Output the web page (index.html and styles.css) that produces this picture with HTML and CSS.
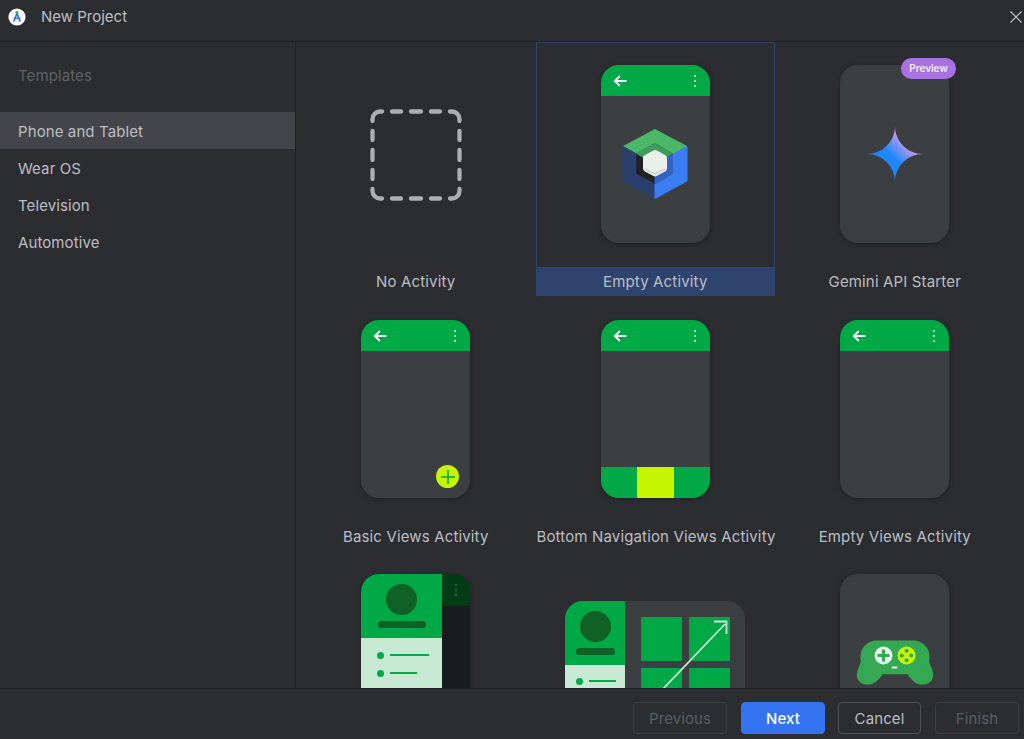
FILE: index.html
```html
<!DOCTYPE html>
<html lang="en">
<head>
<meta charset="utf-8">
<title>New Project</title>
<link rel="stylesheet" href="styles.css">
</head>
<body>
<svg class="defs" width="0" height="0" aria-hidden="true">
  <symbol id="back" viewBox="0 0 14 12"><path d="M13.500 6H2M6.800 1L1.800 6l5 5" fill="none" stroke="#fff" stroke-width="1.900"/></symbol>
  <symbol id="dots" viewBox="0 0 4 14"><g fill="#d5eedd"><circle cx="2" cy="2" r="1"/><circle cx="2" cy="7" r="1"/><circle cx="2" cy="12" r="1"/></g></symbol>
</svg>
<div class="dialog">
  <header class="titlebar">
    <svg class="app-logo" viewBox="0 0 18 18" width="18" height="18">
      <circle cx="9" cy="9" r="8.600" fill="#fff"/>
      <path d="M9 3.200L4.900 13.600h1.900L9 7.600l2.200 6h1.900z" fill="#2f6fe0"/>
      <path d="M5.600 10.200h6.800" stroke="#2f6fe0" stroke-width="1.300"/>
      <circle cx="9" cy="4.600" r="1.500" fill="#34a853"/>
    </svg>
    <span class="title">New Project</span>
    <svg class="close" viewBox="0 0 12 12" width="12" height="12"><path d="M.5.5l11 11M11.500.5l-11 11" stroke="#c3c5ca" stroke-width="1.100" fill="none"/></svg>
  </header>
  <div class="body">
    <aside class="sidebar">
      <div class="side-title">Templates</div>
      <ul class="side-list">
        <li class="side-item active">Phone and Tablet</li>
        <li class="side-item">Wear OS</li>
        <li class="side-item">Television</li>
        <li class="side-item">Automotive</li>
      </ul>
    </aside>
    <main class="gallery">
      <div class="grid">
        <div class="cell">
          <div class="art">
            <svg class="dashed" viewBox="0 0 92 92" width="92" height="92">
              <path d="M2.500 12V10A7.500 7.500 0 0 1 10 2.500H12M22 2.500H31M41 2.500H51M61 2.500H70M80 2.500H82A7.500 7.500 0 0 1 89.500 10V12M89.500 22V31M89.500 41V51M89.500 61V70M89.500 80V82A7.500 7.500 0 0 1 82 89.500H80M70 89.500H61M51 89.500H41M31 89.500H22M12 89.500H10A7.500 7.500 0 0 1 2.500 82V80M2.500 70V61M2.500 51V41M2.500 31V22" fill="none" stroke="#aeafb1" stroke-width="4.300" stroke-linecap="round"/>
            </svg>
          </div>
          <div class="label">No Activity</div>
        </div>
        <div class="cell selected">
          <div class="art">
            <div class="phone">
              <div class="appbar"><svg class="ic-back"><use href="#back"/></svg><svg class="ic-dots"><use href="#dots"/></svg></div>
              <div class="phone-center">
                <svg class="cube" viewBox="0 0 66 70" width="66" height="70">
                  <path d="M33 .5L65 17.500 33 35 1 17.500z" fill="#4bb868" stroke="#4bb868" stroke-linejoin="round"/>
                  <path d="M1 17.500L33 35v34.500L1 52z" fill="#2a3f6e" stroke="#2a3f6e" stroke-linejoin="round"/>
                  <path d="M65 17.500L33 35v34.500L65 52z" fill="#3b7df2" stroke="#3b7df2" stroke-linejoin="round"/>
                  <path d="M33 15.500L49.500 25v19L33 53.500 15.500 44V25z" fill="#202124" stroke="#202124" stroke-width="2.500" stroke-linejoin="round"/>
                  <path d="M33 14.500L50.500 24.500 33 35 14.500 24.500z" fill="#3f9c5f" stroke="#3f9c5f" stroke-linejoin="round"/>
                  <path d="M50.500 25v19.500L33 54.500V35z" fill="#3463bf" stroke="#3463bf" stroke-linejoin="round"/>
                  <path d="M33 24.500l8.500 4.500v10.500L33 44l-8.500-4.500V29z" fill="#e9f0ea" stroke="#e9f0ea" stroke-width="7" stroke-linejoin="round"/>
                  <path d="M22 40.500l11 6 11-6-1-1.500-10 5-10-5z" fill="#d2d9d3"/>
                </svg>
              </div>
            </div>
          </div>
          <div class="label">Empty Activity</div>
        </div>
        <div class="cell">
          <div class="art">
            <div class="phone">
              <div class="phone-center full">
                <svg class="spark" viewBox="0 0 56 56" width="56" height="56">
                  <defs><linearGradient id="sg" x1="0.200" y1="0.800" x2="0.800" y2="0.200"><stop offset="0.420" stop-color="#1f87ff"/><stop offset="0.620" stop-color="#6c91f5"/><stop offset="0.800" stop-color="#bb98ea"/></linearGradient></defs>
                  <path d="M28 0C28 15.500 40.500 28 56 28 40.500 28 28 40.500 28 56 28 40.500 15.500 28 0 28 15.500 28 28 15.500 28 0z" fill="url(#sg)"/>
                </svg>
              </div>
            </div>
            <span class="badge">Preview</span>
          </div>
          <div class="label">Gemini API Starter</div>
        </div>
        <div class="cell">
          <div class="art">
            <div class="phone">
              <div class="appbar"><svg class="ic-back"><use href="#back"/></svg><svg class="ic-dots"><use href="#dots"/></svg></div>
              <div class="fab"><svg viewBox="0 0 16 16" width="16" height="16"><path d="M8 1v14M1 8h14" stroke="#00a846" stroke-width="1.600"/></svg></div>
            </div>
          </div>
          <div class="label">Basic Views Activity</div>
        </div>
        <div class="cell">
          <div class="art">
            <div class="phone column">
              <div class="appbar"><svg class="ic-back"><use href="#back"/></svg><svg class="ic-dots"><use href="#dots"/></svg></div>
              <div class="bottomnav"><span class="navactive"></span></div>
            </div>
          </div>
          <div class="label">Bottom Navigation Views Activity</div>
        </div>
        <div class="cell">
          <div class="art">
            <div class="phone">
              <div class="appbar"><svg class="ic-back"><use href="#back"/></svg><svg class="ic-dots"><use href="#dots"/></svg></div>
            </div>
          </div>
          <div class="label">Empty Views Activity</div>
        </div>
        <div class="cell">
          <div class="art tight">
            <div class="phone drawer">
              <div class="drawer-main">
                <div class="drawer-head"><span class="avatar"></span><span class="namebar"></span></div>
                <div class="drawer-list">
                  <div class="li"><i></i><b class="l39"></b></div>
                  <div class="li"><i></i><b class="l27"></b></div>
                </div>
              </div>
              <div class="drawer-side"><div class="scrim-bar"><svg class="ic-dots dim"><use href="#dots"/></svg></div></div>
            </div>
          </div>
        </div>
        <div class="cell">
          <div class="art tablet-art">
            <div class="tablet">
              <div class="tablet-nav">
                <div class="drawer-head"><span class="avatar"></span><span class="namebar wide"></span></div>
                <div class="drawer-list compact"><div class="li"><i></i><b class="l27"></b></div></div>
              </div>
              <div class="tablet-grid"><span></span><span></span><span></span><span></span></div>
              <svg class="tablet-arrow" viewBox="0 0 70 72" width="70" height="72"><path d="M1 71L63 6M52 3.500h12.500V16" fill="none" stroke="#c8e9d3" stroke-width="1.800"/></svg>
            </div>
          </div>
        </div>
        <div class="cell">
          <div class="art tight">
            <div class="phone game">
              <svg class="pad" viewBox="0 0 78 46" width="78" height="46">
                <path d="M6 18C4 26 0 31 1 37c1 5 6 8 12 7.500 6-.5 10-5 14-11zM72 18c2 8 6 13 5 19-1 5-6 8-12 7.500-6-.5-10-5-14-11z" fill="#34a853"/>
                <path d="M5 17C5 33 20 34 39 34s34-1 34-17" fill="none" stroke="#26803f" stroke-width="1"/>
                <rect x="4.500" y="0.500" width="69" height="33.500" rx="16" fill="#34a853"/>
                <circle cx="27.500" cy="15.500" r="9" fill="#e8f3ea"/>
                <path d="M27.500 9.500v12M21.500 15.500h12" stroke="#34a853" stroke-width="3.200"/>
                <circle cx="50.500" cy="15.500" r="9" fill="#c6f500"/>
                <g fill="#34a853"><circle cx="50.500" cy="10.800" r="2"/><circle cx="50.500" cy="20.200" r="2"/><circle cx="45.800" cy="15.500" r="2"/><circle cx="55.200" cy="15.500" r="2"/></g>
                <rect x="35.500" y="26.500" width="6" height="2" rx="1" fill="#e8f3ea"/>
              </svg>
            </div>
          </div>
        </div>
      </div>
    </main>
  </div>
  <footer class="footer">
    <button class="btn wide disabled">Previous</button>
    <button class="btn primary">Next</button>
    <button class="btn cancel">Cancel</button>
    <button class="btn disabled">Finish</button>
  </footer>
</div>
</body>
</html>
```

FILE: styles.css
```css
* { box-sizing: border-box; }
html, body { margin: 0; height: 100%; }
body {
  background: #2b2d30;
  color: #bcbec4;
  font-family: Inter, "Liberation Sans", sans-serif;
  font-size: 15px;
  overflow: hidden;
}
.defs { display: block; height: 0; }
.dialog { display: flex; flex-direction: column; width: 1024px; height: 739px; }
.titlebar {
  height: 42px;
  flex: none;
  display: flex;
  align-items: center;
  padding: 0 8px 8px 8px;
  border-bottom: 1px solid #1f2023;
}
.app-logo { margin-right: 15px; }
.close { margin-left: auto; margin-right: -6px; }
.body { flex: 1; display: flex; min-height: 0; }
.sidebar { width: 296px; flex: none; border-right: 1px solid #1f2023; }
.side-title { padding: 24px 0 0 18px; height: 70px; color: #5f6166; letter-spacing: 0.1px; }
.side-list { list-style: none; margin: 0; padding: 0; }
.side-item {
  height: 37px;
  line-height: 39px;
  padding-left: 18px;
  width: 295px;
  letter-spacing: 0.1px;
  overflow: hidden;
}
.side-item.active { background: #43454a; }
.gallery { flex: 1; overflow: hidden; }
.grid { display: grid; grid-template-columns: repeat(3, 239.5px); grid-auto-rows: 255px; }
.cell { display: flex; flex-direction: column; border: 1px solid transparent; }
.cell.selected { border-color: #2e436e #2e436e transparent; }
.art { position: relative; flex: 1; display: flex; justify-content: center; align-items: flex-start; padding-top: 22px; }
.art.tight { padding-top: 21px; }
.label {
  height: 29px;
  line-height: 29px;
  text-align: center;
  white-space: nowrap;
  letter-spacing: 0.15px;
}
.selected .label { background: #2e436e; }
.dashed { margin-top: 43.5px; }
.phone {
  position: relative;
  width: 109px;
  height: 178px;
  background: #3c3f41;
  border-radius: 18px;
  overflow: hidden;
  box-shadow: 0 1px 5px rgba(0,0,0,.28);
}
.phone.column { display: flex; flex-direction: column; justify-content: space-between; }
.appbar { height: 31px; background: #00a846; display: flex; align-items: center; justify-content: space-between; padding: 0 13px 0 12px; }
.ic-back { width: 14px; height: 12px; }
.ic-dots { width: 4px; height: 14px; }
.ic-dots.dim { opacity: .3; }
.phone-center { height: 147px; display: flex; align-items: center; justify-content: center; }
.phone-center.full { height: 178px; }
.cube { margin-top: -11px; }
.badge {
  position: absolute;
  top: 15px;
  left: 125px;
  width: 55px;
  height: 21px;
  line-height: 21px;
  text-align: center;
  border-radius: 11px;
  background: #a873e0;
  color: #f3eafc;
  font-size: 10px;
  font-weight: 600;
}
.fab {
  position: absolute;
  left: 75px;
  top: 145px;
  width: 23px;
  height: 23px;
  border-radius: 50%;
  background: #c6f500;
  display: flex;
  align-items: center;
  justify-content: center;
}
.bottomnav { height: 31px; background: #00a846; display: flex; justify-content: center; }
.navactive { width: 37px; background: #c6f500; }
.drawer { display: flex; background: #191c1e; }
.drawer-main { width: 81px; flex: none; }
.drawer-head { height: 64px; background: #00a846; display: flex; flex-direction: column; align-items: center; padding-top: 10px; }
.avatar { width: 31px; height: 31px; border-radius: 50%; background: #0f6126; flex: none; }
.namebar { width: 48px; height: 6.500px; border-radius: 4px; background: #0f6126; margin-top: 6px; flex: none; }
.namebar.wide { width: 39px; }
.drawer-list { height: 114px; background: #c8e9d3; padding: 8px 0 0 16px; }
.drawer-list.compact { padding: 7px 0 0 11px; }
.li { display: flex; align-items: center; height: 18px; }
.li i { width: 7px; height: 7px; border-radius: 50%; background: #00a846; margin-right: 6px; }
.li b { display: block; height: 1.500px; background: #00a846; }
.l39 { width: 39px; }
.l27 { width: 27px; }
.drawer-side { flex: 1; }
.scrim-bar { height: 32px; background: #003d17; display: flex; align-items: center; justify-content: center; }
.tablet-art { padding-top: 48px; }
.tablet {
  position: relative;
  width: 180px;
  height: 120px;
  display: flex;
  background: #3c3f41;
  border-radius: 18px;
  overflow: hidden;
}
.tablet-nav { width: 60px; flex: none; }
.tablet-grid { display: grid; grid-template-columns: 41px 41px; grid-auto-rows: 44px; gap: 7px; padding: 16px 0 0 16px; }
.tablet-grid span { background: #00a846; border-radius: 1px; }
.tablet-arrow { position: absolute; left: 97px; top: 17px; }
.game { display: flex; justify-content: center; }
.pad { margin-top: 65.5px; }
.footer {
  height: 51px;
  flex: none;
  display: flex;
  justify-content: flex-end;
  align-items: flex-start;
  gap: 14px;
  padding: 13px 5px 0 0;
  border-top: 1px solid #1f2023;
  background: #2b2d30;
}
.btn {
  height: 32px;
  width: 84px;
  font: 15px Inter, "Liberation Sans", sans-serif;
  letter-spacing: 0.1px;
  color: #bcbec4;
  background: transparent;
  border: 1px solid #4e5157;
  border-radius: 4px;
  padding: 0;
}
.btn.primary { background: #3574f0; border-color: #3574f0; color: #fff; font-weight: 500; }
.btn.disabled { color: #5a5d63; border-color: #3c3e43; }
.btn.wide { width: 94px; }
.btn.cancel { width: 83px; margin-left: -1px; }
```
